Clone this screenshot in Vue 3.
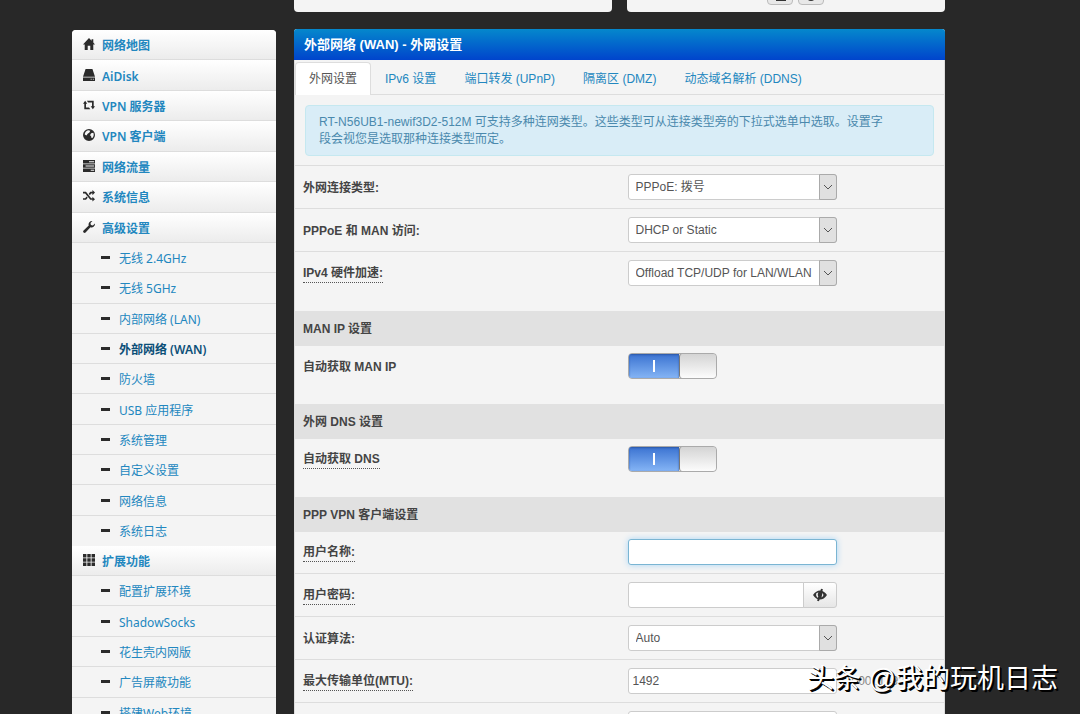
<template>
  <div class="page">
    <div class="layout">
      <nav class="sidebar">
        <ul class="menu menu-main">
          <li v-for="item in mainMenu" :key="item.text">
            <a href="#">
              <svg class="icon" viewBox="0 0 14 14"><path fill-rule="evenodd" :d="icons[item.icon]" /></svg>
              <span>{{ item.text }}</span>
            </a>
          </li>
        </ul>
        <ul class="menu menu-sub menu-advanced">
          <li v-for="item in advancedMenu" :key="item">
            <a href="#" :class="{ current: item === activePage }"><i class="dash"></i>{{ item }}</a>
          </li>
        </ul>
        <ul class="menu menu-main">
          <li>
            <a href="#">
              <svg class="icon" viewBox="0 0 14 14"><path :d="icons.grid" /></svg>
              <span>扩展功能</span>
            </a>
          </li>
        </ul>
        <ul class="menu menu-sub menu-extra">
          <li v-for="item in extraMenu" :key="item">
            <a href="#"><i class="dash"></i>{{ item }}</a>
          </li>
        </ul>
      </nav>

      <main class="content">
        <div class="cards">
          <div class="card"></div>
          <div class="card card-actions">
            <button type="button"><svg viewBox="0 0 14 14"><path d="M1 3h8v4h4v6H3v-3H1z" /></svg></button>
            <button type="button"><svg viewBox="0 0 14 14"><circle cx="7" cy="9" r="4" /></svg></button>
          </div>
        </div>

        <section class="panel">
          <h2 class="panel-title">外部网络 (WAN) - 外网设置</h2>
          <div class="tabs">
            <a v-for="tab in tabs" :key="tab" href="#" :class="{ active: tab === activeTab }" @click.prevent="activeTab = tab">{{ tab }}</a>
          </div>
          <p class="alert">RT-N56UB1-newif3D2-512M 可支持多种连网类型。这些类型可从连接类型旁的下拉式选单中选取。设置字段会视您是选取那种连接类型而定。</p>

          <form @submit.prevent>
            <div v-for="(group, index) in groups" :key="index" class="group">
              <h3 v-if="group.title">{{ group.title }}</h3>
              <div v-for="field in group.fields" :key="field.id" class="row">
                <div class="row-label">
                  <label :for="field.id" :class="{ hint: field.hint }">{{ field.label }}</label>
                </div>
                <div class="row-control">
                  <div v-if="field.type === 'select'" class="select">
                    <select :id="field.id">
                      <option>{{ field.value }}</option>
                    </select>
                    <span class="select-arrow">
                      <svg viewBox="0 0 10 10"><path d="M1 3l4 4 4-4" /></svg>
                    </span>
                  </div>

                  <label v-else-if="field.type === 'toggle'" class="toggle">
                    <input :id="field.id" v-model="field.value" type="checkbox" />
                    <span class="toggle-on"></span>
                    <span class="toggle-handle"></span>
                  </label>

                  <div v-else-if="field.type === 'password'" class="password">
                    <input :id="field.id" v-model="field.value" :type="showPassword ? 'text' : 'password'" />
                    <button type="button" @click="showPassword = !showPassword">
                      <svg viewBox="0 0 14 14">
                        <path fill-rule="evenodd" :d="icons.eye" />
                        <path class="slash" d="M9 1L5 13" />
                      </svg>
                    </button>
                  </div>

                  <template v-else>
                    <input :id="field.id" v-model="field.value" class="text" :class="{ focused: field.focused }" type="text" />
                    <span v-if="field.range" class="range">{{ field.range }}</span>
                  </template>
                </div>
              </div>
            </div>
          </form>
        </section>
      </main>
    </div>
    <div class="watermark">头条 @我的玩机日志</div>
  </div>
</template>

<script setup>
import { ref } from 'vue';

const icons = {
  home: 'M7 0L0 7.500h2V14h3.500V9h3v5H12V7.500h2L12 5.300V1.500h-2v1.700z',
  disk: 'M3 0h8l3 9H0zM0 10h14v4H0zM9 11.500v1h1v-1zM11.500 11.500v1h1v-1z',
  retweet: 'M2.500 2L5 5.500H3.500V10H7l1.500 2h-7V5.500H0zM4.500 2h8v6.500H14L11.500 12 9 8.500h1.500V4H6z',
  globe: 'M7 0a7 7 0 1 0 0 14A7 7 0 0 0 7 0zM6 1.500L8.500 2 7.500 4l-2 1.500L4 7.500 2 6.500C2 4 4 2 6 1.500zM9.500 5l2.500-.5c1 2 .5 4.500-1 6L9.500 10V8L8 7.500z',
  tasks: 'M0 0h14v4H0zM0 5h14v4H0zM0 10h14v4H0zM7 1.500v1h6v-1zM3 6.500v1h10v-1zM9 11.500v1h4v-1z',
  random: 'M0 2h3.500l6 7.500H11V8l3 2.700L11 13.500v-2H8.500l-6-7.500H0zM0 9.500h2.500l1.700-2 1.300 1.600-2 2.400H0zM8.500 2H11V0l3 3-3 3V4H9.500L8 6 6.700 4.300z',
  wrench: 'M14 3.500a4 4 0 0 1-5.300 3.800L3 13.300a1.600 1.600 0 0 1-2.300-2.300L6.700 5.300A4 4 0 0 1 11 0.100L8.700 2.400l.5 2.400 2.400.5L13.900 3z',
  grid: 'M0 0h4v4H0zM5 0h4v4H5zM10 0h4v4h-4zM0 5h4v4H0zM5 5h4v4H5zM10 5h4v4h-4zM0 10h4v4H0zM5 10h4v4H5zM10 10h4v4h-4z',
  eye: 'M0 7c2-3 4.500-4.500 7-4.500S12 4 14 7c-2 3-4.500 4.500-7 4.500S2 10 0 7zM3.500 5C2.500 7 3.500 9 5 10l.5-1.500C4.500 7.500 4.500 6 5.500 4.500zM9.500 5l-1 4.500c2-1 2.500-3 1-4.500z'
};

const mainMenu = [
  { icon: 'home', text: '网络地图' },
  { icon: 'disk', text: 'AiDisk' },
  { icon: 'retweet', text: 'VPN 服务器' },
  { icon: 'globe', text: 'VPN 客户端' },
  { icon: 'tasks', text: '网络流量' },
  { icon: 'random', text: '系统信息' },
  { icon: 'wrench', text: '高级设置' }
];

const advancedMenu = [
  '无线 2.4GHz', '无线 5GHz', '内部网络 (LAN)', '外部网络 (WAN)', '防火墙',
  'USB 应用程序', '系统管理', '自定义设置', '网络信息', '系统日志'
];

const extraMenu = ['配置扩展环境', 'ShadowSocks', '花生壳内网版', '广告屏蔽功能', '搭建Web环境'];

const activePage = '外部网络 (WAN)';

const tabs = ['外网设置', 'IPv6 设置', '端口转发 (UPnP)', '隔离区 (DMZ)', '动态域名解析 (DDNS)'];
const activeTab = ref('外网设置');
const showPassword = ref(false);

const groups = ref([
  {
    fields: [
      { id: 'wan_proto', label: '外网连接类型:', type: 'select', value: 'PPPoE: 拨号' },
      { id: 'wan_man', label: 'PPPoE 和 MAN 访问:', type: 'select', value: 'DHCP or Static' },
      { id: 'hw_nat', label: 'IPv4 硬件加速:', hint: true, type: 'select', value: 'Offload TCP/UDP for LAN/WLAN' }
    ]
  },
  {
    title: 'MAN IP 设置',
    fields: [{ id: 'man_dhcp', label: '自动获取 MAN IP', type: 'toggle', value: true }]
  },
  {
    title: '外网 DNS 设置',
    fields: [{ id: 'wan_dns', label: '自动获取 DNS', hint: true, type: 'toggle', value: true }]
  },
  {
    title: 'PPP VPN 客户端设置',
    fields: [
      { id: 'ppp_user', label: '用户名称:', hint: true, type: 'text', value: '', focused: true },
      { id: 'ppp_pass', label: '用户密码:', hint: true, type: 'password', value: '' },
      { id: 'ppp_auth', label: '认证算法:', type: 'select', value: 'Auto' },
      { id: 'ppp_mtu', label: '最大传输单位(MTU):', hint: true, type: 'text', value: '1492', range: '[1000..1492]' },
      { id: 'ppp_mru', label: '', type: 'text', value: '' }
    ]
  }
]);
</script>

<style>
body {
  background: #282828;
}
</style>

<style scoped>
* {
  box-sizing: border-box;
}

.page {
  position: relative;
  height: 100vh;
  overflow: hidden;
  background: #282828;
  color: #444;
  font-family: "Liberation Sans", "Noto Sans CJK SC", sans-serif;
  font-size: 12px;
  line-height: 17px;
}

.layout {
  display: grid;
  grid-template-columns: 204px 1fr;
  align-items: start;
  gap: 18px;
  padding: 0 135px 0 72px;
}

a {
  color: #2287bf;
  text-decoration: none;
}

button,
input,
select {
  font: inherit;
  color: #555;
}

/* sidebar */
.sidebar {
  margin-top: 30px;
  border-radius: 4px;
  overflow: hidden;
  background: #f4f4f4;
  font-family: "Noto Sans", "Noto Sans CJK SC", sans-serif;
}

.menu {
  display: grid;
  grid-auto-rows: 1fr;
  margin: 0;
  padding: 0;
  list-style: none;
}

.menu li {
  display: flex;
}

.menu a {
  flex: 1;
  display: flex;
  align-items: center;
  min-height: 30px;
  padding-top: 2px;
  border-bottom: 1px solid #ddd;
}

.menu-main:first-child {
  min-height: 213px;
}

.menu-main a {
  gap: 7px;
  padding-left: 11px;
  background: linear-gradient(#fff, #ececec);
  font-weight: 600;
}

.menu-sub a {
  gap: 9px;
  padding-left: 29px;
}

.menu-advanced {
  min-height: 303px;
}

.menu-advanced li:last-child a {
  border-bottom: 0;
}

.menu-extra {
  min-height: 152px;
}

.menu .current {
  color: #0b4f78;
  font-weight: 600;
}

.icon {
  width: 12px;
  height: 12px;
  margin-bottom: 3px;
  fill: #2b2b2b;
}

.dash {
  width: 9px;
  height: 3px;
  margin-bottom: 2px;
  background: #2b2b2b;
}

/* top cards */
.cards {
  display: grid;
  grid-template-columns: 1fr 1fr;
  gap: 15px;
  margin-bottom: 17px;
}

.card {
  height: 12px;
  border-radius: 0 0 4px 4px;
  background: #f4f4f4;
  overflow: hidden;
}

.card-actions {
  display: flex;
  align-items: flex-end;
  justify-content: center;
  gap: 5px;
  padding: 0 0 7px 18px;
}

.card-actions button {
  flex: none;
  width: 26px;
  height: 20px;
  padding: 0;
  border: 1px solid #bbb;
  border-radius: 4px;
  background: #e8e8e8;
}

.card-actions svg {
  display: block;
  width: 14px;
  height: 14px;
  margin: 0 auto;
  fill: #333;
}

/* panel */
.panel {
  border: solid #ddd;
  border-width: 0 1px;
  border-radius: 3px 3px 0 0;
  background: #f4f4f4;
}

.panel-title {
  margin: 0 -1px;
  padding: 0 10px;
  border-radius: 3px 3px 0 0;
  background: linear-gradient(#0588cc, #0044cc);
  color: #fff;
  font-size: 13px;
  font-weight: bold;
  line-height: 31px;
}

.tabs {
  display: flex;
  margin-top: 2px;
  border-bottom: 1px solid #ddd;
}

.tabs a {
  margin-bottom: -1px;
  padding: 0 13px;
  border: 1px solid transparent;
  border-bottom: 0;
  border-radius: 4px 4px 0 0;
  line-height: 32px;
}

.tabs .active {
  border-color: #ddd;
  background: #fff;
  color: #555;
}

.alert {
  margin: 10px 10px 9px;
  padding: 8px 42px 7px 13px;
  border: 1px solid #c5e8f0;
  border-radius: 4px;
  background: #d9edf7;
  color: #4a89ad;
}

.group {
  padding-bottom: 17px;
}

.group h3 {
  margin: 0;
  padding: 2px 8px 0;
  background: #e1e1e1;
  font-size: 12px;
  font-weight: bold;
  line-height: 33px;
}

.row {
  display: flex;
  align-items: center;
  padding: 8px 0;
  border-top: 1px solid #ddd;
}

h3 + .row {
  padding-top: 7px;
  border-top: 0;
}

.row-label {
  flex: 0 0 50%;
  padding: 2px 0 0 8px;
  font-weight: bold;
}

.row-control {
  flex: 1;
  display: flex;
  align-items: center;
  gap: 5px;
  height: 26px;
  padding-left: 8px;
}

.hint {
  display: inline-block;
  border-bottom: 1px dotted #555;
}

.text,
.select,
.password {
  width: 209px;
  height: 26px;
}

.text,
.select select,
.password input {
  border: 1px solid #ccc;
  border-radius: 3px;
  background: #fff;
  outline: 0;
}

.text {
  padding: 0 4px;
}

.text.focused {
  border-color: #7ab5d3;
  box-shadow: 0 0 6px #a9d5f5;
}

.select {
  display: grid;
}

.select select {
  grid-area: 1 / 1;
  min-width: 0;
  padding: 0 18px 0 7px;
  appearance: none;
}

.select-arrow {
  grid-area: 1 / 1;
  justify-self: end;
  display: flex;
  align-items: center;
  justify-content: center;
  width: 18px;
  border: 1px solid #aaa;
  border-radius: 0 3px 3px 0;
  background: #e0e0e0;
  pointer-events: none;
}

.select-arrow svg {
  width: 10px;
  height: 10px;
  fill: none;
  stroke: #555;
}

.password {
  display: flex;
}

.password input {
  flex: 1;
  min-width: 0;
  border-radius: 3px 0 0 3px;
}

.password button {
  width: 34px;
  margin-left: -1px;
  padding: 0;
  border: 1px solid #ccc;
  border-radius: 0 3px 3px 0;
  background: linear-gradient(#fff, #e6e6e6);
}

.password svg {
  display: block;
  width: 14px;
  height: 14px;
  margin: 0 auto;
  fill: #333;
}

.password .slash {
  stroke: #333;
  stroke-width: 2;
}

.toggle {
  position: relative;
  display: flex;
  width: 89px;
  height: 26px;
  border: 1px solid #aaa;
  border-radius: 4px;
  overflow: hidden;
  background: #ddd;
}

.toggle input {
  position: absolute;
  inset: 0;
  margin: 0;
  opacity: 0;
}

.toggle-on {
  display: none;
  flex: 1;
  align-items: center;
  justify-content: center;
  background: linear-gradient(#3b73d1, #84b4f5);
  box-shadow: inset 0 1px 2px #2a57a8;
}

.toggle input:checked + .toggle-on {
  display: flex;
}

.toggle-on::after {
  content: "";
  width: 2px;
  height: 12px;
  background: #fff;
}

.toggle-handle {
  width: 37px;
  border-left: 1px solid #777;
  border-radius: 3px;
  background: linear-gradient(#d4d4d4, #fcfcfc);
}

.range {
  color: #888;
}

.watermark {
  position: absolute;
  right: 22px;
  bottom: 15px;
  color: #fff;
  font-family: "Liberation Sans", "Noto Sans CJK SC", sans-serif;
  font-size: 27px;
  line-height: 40px;
  text-shadow: 2px 2px 0 #000, 1px 1px 0 #000;
}
</style>
